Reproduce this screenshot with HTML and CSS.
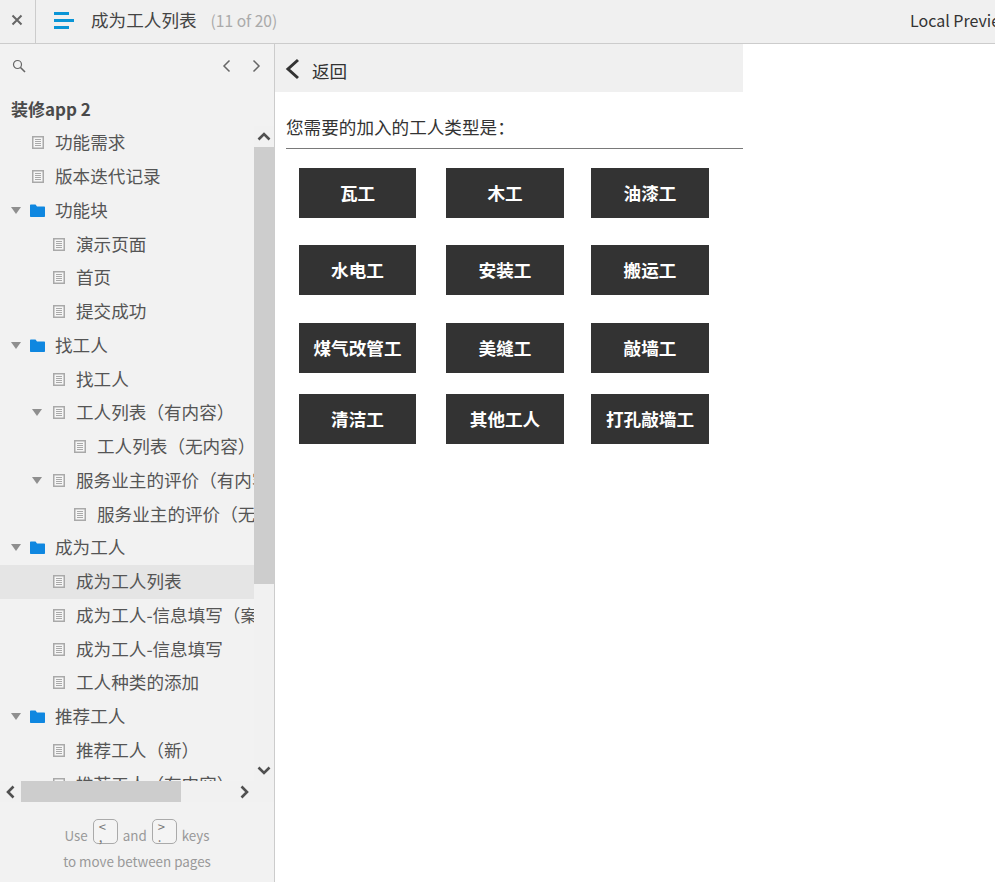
FILE: index.html
```html
<!DOCTYPE html>
<html lang="zh">
<head>
<meta charset="utf-8">
<title>成为工人列表</title>
<link rel="stylesheet" href="styles.css">
</head>
<body>
<svg class="defs" width="0" height="0" aria-hidden="true">
  <symbol id="doc" viewBox="0 0 12 13">
    <rect x=".75" y=".75" width="10.500" height="11.500" fill="#f6f6f6" stroke="#a9a9a9" stroke-width="1.500"/>
    <path d="M3 3.500h6M3 5.500h6M3 7.500h6M3 9.500h6" stroke="#a9a9a9" stroke-width="1"/>
  </symbol>
  <symbol id="folder" viewBox="0 0 15 13">
    <path d="M0 1.500C0 .8.500.500 1 .500h4.500l1.500 2h7c.6 0 1 .4 1 1V12c0 .6-.4 1-1 1H1c-.6 0-1-.4-1-1z" fill="#0f87e0"/>
  </symbol>
  <symbol id="tri" viewBox="0 0 10 7">
    <path d="M0 0h10L5 7z" fill="#8f8f8f"/>
  </symbol>
</svg>
<header class="topbar">
  <div class="close-cell">
    <svg width="12" height="12" viewBox="0 0 12 12"><path d="M1.500 1.500l9 9M10.500 1.500l-9 9" stroke="#666" stroke-width="2"/></svg>
  </div>
  <div class="head-main">
    <svg class="burger" width="20" height="17" viewBox="0 0 20 17"><path d="M0 1.500h15M0 8.500h20M0 15.500h15" stroke="#0a95d6" stroke-width="3"/></svg>
    <span class="page-title">成为工人列表</span>
    <span class="page-count">(11 of 20)</span>
  </div>
  <div class="preview">Local Preview</div>
</header>
<div class="layout">
  <aside class="sidebar">
    <div class="search-row">
      <svg width="14" height="14" viewBox="0 0 14 14"><circle cx="5.500" cy="5.500" r="4" fill="none" stroke="#666" stroke-width="1.200"/><path d="M8.500 8.500l4.500 4.500" stroke="#666" stroke-width="1.600"/></svg>
      <div class="pager">
        <svg width="9" height="14" viewBox="0 0 9 14"><path d="M7.500 1.500L2 7l5.500 5.500" fill="none" stroke="#666" stroke-width="1.500"/></svg>
        <svg width="9" height="14" viewBox="0 0 9 14"><path d="M1.500 1.500L7 7l-5.500 5.500" fill="none" stroke="#666" stroke-width="1.500"/></svg>
      </div>
    </div>
    <div class="project">装修app 2</div>
    <div class="tree-frame">
      <div class="tree">
        <div class="row l0"><span class="twist"></span><span class="ico"><svg class="doc"><use href="#doc"/></svg></span><span class="label">功能需求</span></div>
        <div class="row l0"><span class="twist"></span><span class="ico"><svg class="doc"><use href="#doc"/></svg></span><span class="label">版本迭代记录</span></div>
        <div class="row l0"><span class="twist"><svg class="tri"><use href="#tri"/></svg></span><span class="ico"><svg class="folder"><use href="#folder"/></svg></span><span class="label">功能块</span></div>
        <div class="row l1"><span class="twist"></span><span class="ico"><svg class="doc"><use href="#doc"/></svg></span><span class="label">演示页面</span></div>
        <div class="row l1"><span class="twist"></span><span class="ico"><svg class="doc"><use href="#doc"/></svg></span><span class="label">首页</span></div>
        <div class="row l1"><span class="twist"></span><span class="ico"><svg class="doc"><use href="#doc"/></svg></span><span class="label">提交成功</span></div>
        <div class="row l0"><span class="twist"><svg class="tri"><use href="#tri"/></svg></span><span class="ico"><svg class="folder"><use href="#folder"/></svg></span><span class="label">找工人</span></div>
        <div class="row l1"><span class="twist"></span><span class="ico"><svg class="doc"><use href="#doc"/></svg></span><span class="label">找工人</span></div>
        <div class="row l1"><span class="twist"><svg class="tri"><use href="#tri"/></svg></span><span class="ico"><svg class="doc"><use href="#doc"/></svg></span><span class="label">工人列表（有内容）</span></div>
        <div class="row l2"><span class="twist"></span><span class="ico"><svg class="doc"><use href="#doc"/></svg></span><span class="label">工人列表（无内容）</span></div>
        <div class="row l1"><span class="twist"><svg class="tri"><use href="#tri"/></svg></span><span class="ico"><svg class="doc"><use href="#doc"/></svg></span><span class="label">服务业主的评价（有内容）</span></div>
        <div class="row l2"><span class="twist"></span><span class="ico"><svg class="doc"><use href="#doc"/></svg></span><span class="label">服务业主的评价（无内容）</span></div>
        <div class="row l0"><span class="twist"><svg class="tri"><use href="#tri"/></svg></span><span class="ico"><svg class="folder"><use href="#folder"/></svg></span><span class="label">成为工人</span></div>
        <div class="row l1 current"><span class="twist"></span><span class="ico"><svg class="doc"><use href="#doc"/></svg></span><span class="label">成为工人列表</span></div>
        <div class="row l1"><span class="twist"></span><span class="ico"><svg class="doc"><use href="#doc"/></svg></span><span class="label">成为工人-信息填写（案例）</span></div>
        <div class="row l1"><span class="twist"></span><span class="ico"><svg class="doc"><use href="#doc"/></svg></span><span class="label">成为工人-信息填写</span></div>
        <div class="row l1"><span class="twist"></span><span class="ico"><svg class="doc"><use href="#doc"/></svg></span><span class="label">工人种类的添加</span></div>
        <div class="row l0"><span class="twist"><svg class="tri"><use href="#tri"/></svg></span><span class="ico"><svg class="folder"><use href="#folder"/></svg></span><span class="label">推荐工人</span></div>
        <div class="row l1"><span class="twist"></span><span class="ico"><svg class="doc"><use href="#doc"/></svg></span><span class="label">推荐工人（新）</span></div>
        <div class="row l1"><span class="twist"></span><span class="ico"><svg class="doc"><use href="#doc"/></svg></span><span class="label">推荐工人（有内容）</span></div>
      </div>
      <div class="vbar">
        <div class="sb-btn"><svg width="14" height="9" viewBox="0 0 14 9"><path d="M1.500 7.500L7 2l5.500 5.500" fill="none" stroke="#505050" stroke-width="2.600"/></svg></div>
        <div class="vthumb"></div>
        <div class="vrest"></div>
        <div class="sb-btn"><svg width="14" height="9" viewBox="0 0 14 9"><path d="M1.500 1.500L7 7l5.500-5.500" fill="none" stroke="#505050" stroke-width="2.600"/></svg></div>
      </div>
    </div>
    <div class="hbar">
      <div class="hbtn"><svg width="9" height="14" viewBox="0 0 9 14"><path d="M7.500 1.500L2 7l5.500 5.500" fill="none" stroke="#505050" stroke-width="2.600"/></svg></div>
      <div class="hthumb"></div>
      <div class="hrest"></div>
      <div class="hbtn"><svg width="9" height="14" viewBox="0 0 9 14"><path d="M1.500 1.500L7 7l-5.500 5.500" fill="none" stroke="#505050" stroke-width="2.600"/></svg></div>
    </div>
    <div class="hint">
      <div class="hint-line">Use <kbd class="key">&lt;<br>,</kbd> and <kbd class="key">&gt;<br>.</kbd> keys</div>
      <div class="hint-line second">to move between pages</div>
    </div>
  </aside>
  <main class="content">
    <div class="backbar">
      <svg width="16" height="22" viewBox="0 0 16 22"><path d="M14 2L4 11l10 9" fill="none" stroke="#333" stroke-width="3"/></svg>
      <span class="back-label">返回</span>
    </div>
    <h1 class="question">您需要的加入的工人类型是：</h1>
    <div class="types">
      <button class="type">瓦工</button>
      <button class="type">木工</button>
      <button class="type">油漆工</button>
      <button class="type">水电工</button>
      <button class="type">安装工</button>
      <button class="type">搬运工</button>
      <button class="type">煤气改管工</button>
      <button class="type">美缝工</button>
      <button class="type">敲墙工</button>
      <button class="type">清洁工</button>
      <button class="type">其他工人</button>
      <button class="type">打孔敲墙工</button>
    </div>
  </main>
</div>
</body>
</html>
```
FILE: styles.css
```css
* { box-sizing: border-box; }
html, body { height: 100%; }
body {
  margin: 0;
  overflow: hidden;
  background: #fff;
  color: #333;
  font-family: "Noto Sans CJK SC", "Noto Sans", sans-serif;
  font-size: 17.6px;
  display: flex;
  flex-direction: column;
}
.defs { position: absolute; }

/* top bar */
.topbar {
  flex: none;
  display: flex;
  height: 44px;
  background: #f0f0f0;
  border-bottom: 1px solid #ccc;
  overflow: hidden;
}
.close-cell {
  flex: none;
  width: 36px;
  border-right: 1px solid #ccc;
  display: flex;
  align-items: center;
  justify-content: center;
  padding-right: 1px;
  padding-bottom: 3px;
}
.head-main {
  flex: none;
  width: 874px;
  display: flex;
  align-items: center;
  padding-left: 18px;
  padding-bottom: 3px;
}
.burger { flex: none; margin-right: 17px; margin-top: 1px; }
.page-title { color: #444; line-height: 24px; }
.page-count { color: #aaa; margin-left: 14px; font-size: 15.6px; line-height: 24px; }
.preview {
  flex: none;
  line-height: 41px;
  font-size: 16px;
  color: #333;
  white-space: nowrap;
}

/* layout */
.layout { flex: 1; display: flex; min-height: 0; }
.sidebar {
  flex: none;
  width: 275px;
  display: flex;
  flex-direction: column;
  background: #f2f2f2;
  border-right: 1px solid #ccc;
}
.search-row {
  flex: none;
  height: 44px;
  display: flex;
  align-items: center;
  justify-content: space-between;
  padding: 0 13px 0 12px;
}
.pager { display: flex; gap: 21px; }
.project {
  flex: none;
  height: 36px;
  margin-top: 3px;
  margin-bottom: -1px;
  padding-left: 11px;
  line-height: 36px;
  font-size: 17px;
  font-weight: 700;
  color: #4a4a4a;
}

/* tree */
.tree-frame { flex: none; height: 655px; display: flex; overflow: hidden; }
.tree { flex: none; width: 254px; overflow: hidden; }
.row {
  display: flex;
  align-items: center;
  height: 33.75px;
  white-space: nowrap;
  color: #555;
}
.row.current { background: #e5e5e5; }
.l0 { padding-left: 11px; }
.l1 { padding-left: 32px; }
.l2 { padding-left: 53px; }
.twist { flex: none; width: 19px; display: flex; }
.ico { flex: none; width: 25px; display: flex; }
.doc { width: 12px; height: 13px; margin-left: 2px; }
.folder { width: 15px; height: 13px; }
.tri { width: 10px; height: 7px; }
.label { flex: none; padding-bottom: 2px; }

/* scrollbars */
.vbar { flex: none; width: 20px; display: flex; flex-direction: column; background: #f1f1f1; }
.sb-btn { flex: none; height: 21px; display: flex; align-items: center; justify-content: center; }
.vthumb { flex: none; height: 437px; background: #cdcdcd; }
.vrest { flex: 1; }
.hbar { flex: none; height: 21px; display: flex; background: #f1f1f1; }
.hbtn { flex: none; width: 21px; display: flex; align-items: center; justify-content: center; }
.hthumb { flex: none; width: 160px; background: #cdcdcd; }
.hrest { flex: none; width: 53px; }

/* hint */
.hint { flex: 1; padding-top: 18px; text-align: center; color: #999; font-size: 13.4px; }
.hint-line { display: flex; justify-content: center; align-items: center; gap: 5px; height: 25px; padding-top: 5px; }
.hint-line.second { height: 26px; margin-top: 3px; padding-top: 0; }
.key {
  width: 25px;
  height: 25px;
  margin-top: -8px;
  padding: 2px 0 0 5px;
  border: 1px solid #aaa;
  border-radius: 5px;
  font-family: "Noto Sans CJK SC", sans-serif;
  font-size: 13px;
  line-height: 10px;
  text-align: left;
  color: #777;
  background: #f4f4f4;
}

/* content */
.content { flex: 1; min-width: 0; }
.backbar {
  width: 468px;
  height: 48px;
  background: #f0f0f0;
  display: flex;
  align-items: center;
  padding-left: 9px;
  padding-top: 1px;
}
.back-label { margin-left: 12px; color: #333; padding-top: 4px; }
.question {
  width: 457px;
  height: 57px;
  margin: 0 0 0 11px;
  padding: 22px 0 0;
  border-bottom: 1px solid #797979;
  font-size: 17.6px;
  font-weight: 400;
  line-height: 26px;
  color: #333;
}
.types {
  display: grid;
  grid-template-columns: 147px 145px 118px;
  grid-template-rows: 77px 78px 71px 50px;
  padding: 19px 0 0 24px;
}
.type {
  width: 118px;
  height: 50px;
  padding: 0 0 2px;
  border: 0;
  background: #333;
  color: #fff;
  font-family: inherit;
  font-size: 17.6px;
  font-weight: 700;
}
.type:nth-child(3n+1) { width: 117px; }
```
